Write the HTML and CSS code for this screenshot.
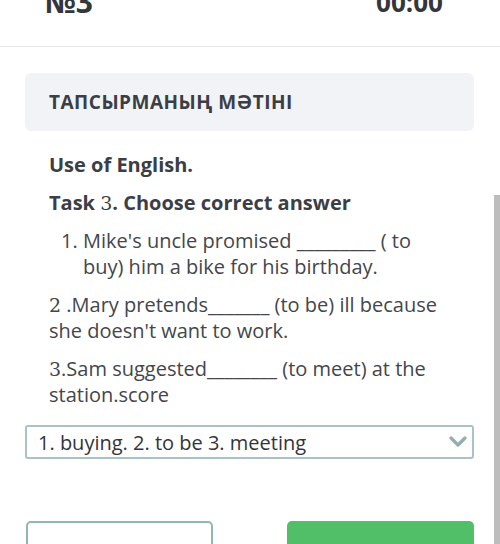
FILE: index.html
```html
<!DOCTYPE html>
<html>
<head>
<meta charset="utf-8">
<link rel="stylesheet" href="styles.css">
</head>
<body>
<div class="page">
  <header class="top">
    <span class="num">№3</span>
    <span class="timer">00:00</span>
  </header>
  <div class="card-title">ТАПСЫРМАНЫҢ МӘТІНІ</div>
  <div class="content">
    <p class="bold">Use of English.</p>
    <p class="bold">Task <span class="digit">3</span>. Choose correct answer</p>
    <ol class="items">
      <li>Mike's uncle promised _________ ( to buy) him a bike for his birthday.</li>
    </ol>
    <p><span class="digit">2</span> .Mary pretends_______ (to be) ill because she doesn't want to work.</p>
    <p><span class="digit">3</span>.Sam suggested________ (to meet) at the station.score</p>
  </div>
  <div class="select">
    <span class="select-text">1. buying. 2. to be 3. meeting</span>
    <svg class="chev" width="18" height="12" viewBox="0 0 18 12"><path d="M2 2 L9 9 L16 2" fill="none" stroke="#93adb2" stroke-width="3.2" stroke-linecap="round" stroke-linejoin="round"/></svg>
  </div>
  <div class="buttons">
    <div class="btn btn-outline"></div>
    <div class="btn btn-green"></div>
  </div>
  <div class="scrollbar"></div>
</div>
</body>
</html>
```
FILE: styles.css
```css
html, body {
  margin: 0;
  padding: 0;
  background: #ffffff;
  overflow: hidden;
}
.page {
  width: 500px;
  height: 544px;
  overflow: hidden;
  position: relative;
  font-family: "Open Sans", "Liberation Sans", sans-serif;
  color: #3f4147;
}
.top {
  margin-top: -13px;
  height: 59px;
  border-bottom: 1px solid #e7e7e7;
  display: flex;
  justify-content: space-between;
  padding: 0 57px 0 45px;
  font-size: 26px;
  line-height: 30px;
  font-weight: 700;
  color: #34363c;
}
.num {
  font-size: 30px;
}
.card-title {
  margin: 26px 26px 0 25px;
  height: 58px;
  box-sizing: border-box;
  background: #f2f3f7;
  border-radius: 6px;
  padding-left: 24px;
  display: flex;
  align-items: center;
  font-size: 19px;
  font-weight: 700;
  color: #3b3e46;
  letter-spacing: 0.5px;
}
.content {
  margin: 21px 55px 0 49px;
  font-size: 20px;
  line-height: 26px;
  color: #44464b;
}
.content p {
  margin: 0 0 12px 0;
}
.content .bold {
  font-weight: 700;
  color: #3b3e45;
}
.digit {
  font-family: "DejaVu Serif", "Liberation Serif", serif;
  font-weight: 400;
  font-size: 19px;
}
.items {
  margin: 0 0 12px 0;
  padding-left: 34px;
}
.select {
  margin: 17px 26px 0 25px;
  height: 34px;
  box-sizing: border-box;
  border: 2px solid #a9c3c5;
  border-radius: 3px;
  display: flex;
  align-items: center;
  justify-content: space-between;
  padding: 0 5px 0 11px;
  font-size: 20px;
  color: #33353a;
}
.chev {
  display: block;
}
.buttons {
  margin: 62px 26px 0 26px;
  display: flex;
  justify-content: space-between;
}
.btn {
  width: 187px;
  height: 50px;
  box-sizing: border-box;
  border-radius: 5px;
}
.btn-outline {
  border: 2px solid #8dbab0;
  background: #ffffff;
}
.btn-green {
  background: #50bf67;
}
.scrollbar {
  position: absolute;
  right: 0;
  top: 195px;
  width: 6px;
  height: 360px;
  background: #bdbdbd;
}
```
